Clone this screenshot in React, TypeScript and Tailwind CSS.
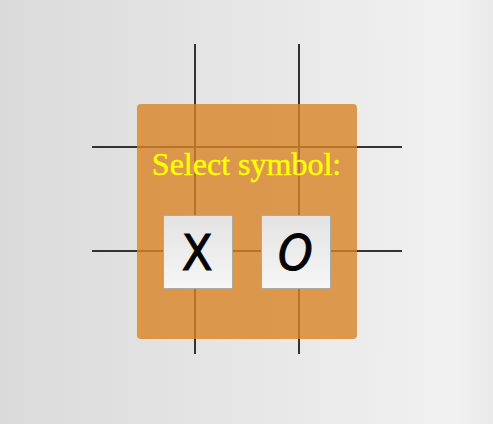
import React from 'react';

const cells = [0, 1, 2, 3, 4, 5, 6, 7, 8];

export default function App() {
  return (
    <div className="w-full h-[424px] bg-[linear-gradient(to_right,#dadada,#f1f1f1_93%,#e9e9e9)] pt-[44px]">
      <div className="relative mx-auto w-[310px] h-[310px]">
        {/* board */}
        <div className="grid grid-cols-[102px_102px_102px] grid-rows-[102px_102px_102px] gap-[2px] bg-[#333] w-[310px] h-[310px]">
          {cells.map((c) => (
            <div key={c} className="bg-[linear-gradient(to_right,#dadada,#f1f1f1_93%,#e9e9e9)] bg-fixed" />
          ))}
        </div>

        {/* symbol picker */}
        <div className="absolute left-[45px] top-[60px] w-[220px] h-[235px] rounded-[4px] bg-[rgba(216,132,37,0.8)] flex flex-col items-center pt-[42px]">
          <p className="font-['Liberation_Serif',serif] text-[32px] leading-[36px] text-[#ffff00] [-webkit-text-stroke:0.4px_#ffff00]">Select symbol:</p>
          <div className="flex gap-[28px] mt-[33px]">
            <button className="w-[70px] h-[74px] border border-[#a8a8a8] bg-[linear-gradient(to_bottom,#e3e3e3,#f6f6f6)] flex items-center justify-center font-['DejaVu_Sans',sans-serif] text-[50px] leading-none text-black [-webkit-text-stroke:1px_black] pt-[2px]">
              <span className="inline-block scale-x-90">X</span>
            </button>
            <button className="w-[70px] h-[74px] border border-[#a8a8a8] bg-[linear-gradient(to_bottom,#e3e3e3,#f6f6f6)] flex items-center justify-center font-['DejaVu_Sans',sans-serif] italic text-[49px] leading-none text-black [-webkit-text-stroke:1px_black] pt-[2px]">
              <span className="inline-block scale-x-90">O</span>
            </button>
          </div>
        </div>
      </div>
    </div>
  );
}
